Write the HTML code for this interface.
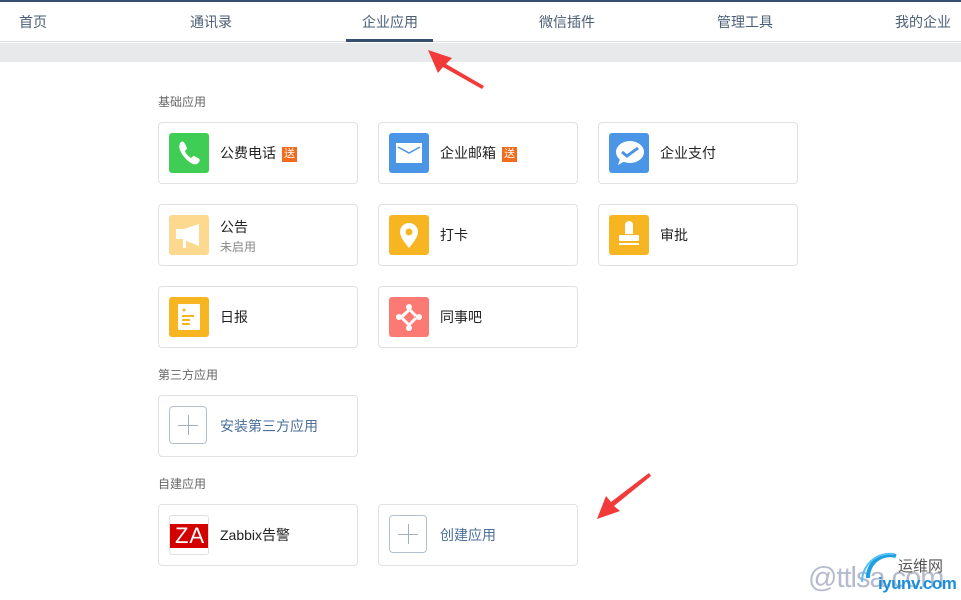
<!DOCTYPE html>
<html><head><meta charset="utf-8"><style>
*{margin:0;padding:0;box-sizing:border-box}
body{width:961px;height:600px;overflow:hidden;background:#fff;font-family:"Liberation Sans","Noto Sans CJK SC",sans-serif;position:relative}
.top{position:absolute;left:0;top:0;width:961px;height:2px;background:#34506e}
.nav{position:absolute;left:0;top:2px;width:961px;height:40px;background:#fff;border-bottom:1px solid #dcdde0}
.nav span{position:absolute;top:10px;font-size:14px;color:#4a5e75}
.ul{position:absolute;left:346px;top:39px;width:87px;height:3px;background:#34506e}
.band{position:absolute;left:0;top:43px;width:961px;height:19px;background:#e8e9eb}
.h{position:absolute;left:158px;font-size:12px;color:#666}
.c{position:absolute;width:200px;height:62px;border:1px solid #e0e1e3;border-radius:4px;background:#fff}
.ic{position:absolute;left:10px;top:10px;width:40px;height:40px;border-radius:3px;overflow:hidden}
.t{position:absolute;left:61px;top:20px;font-size:14px;color:#222;white-space:nowrap}
.s{display:inline-block;background:#f26a1b;color:#fff;font-size:11px;line-height:15px;padding:0 2px;margin-left:6px;vertical-align:1px}
.plus{position:absolute;left:10px;top:10px;width:38px;height:38px;border:1px solid #b4bfcc;border-radius:4px}
.plus:before{content:"";position:absolute;left:8px;top:18px;width:20px;height:1px;background:#a3afbc}
.plus:after{content:"";position:absolute;left:18px;top:8px;width:1px;height:20px;background:#a3afbc}
.blue{color:#4a6f99}
</style></head><body>
<div class="top"></div>
<div class="nav">
<span style="left:19px">首页</span><span style="left:190px">通讯录</span><span style="left:362px">企业应用</span><span style="left:539px">微信插件</span><span style="left:717px">管理工具</span><span style="left:895px">我的企业</span>
</div>
<div class="ul"></div>
<div class="band"></div>

<div class="h" style="top:93px">基础应用</div>
<div class="c" style="left:158px;top:122px"><div class="ic" style="background:#3fcd55"><svg width="40" height="40"><path d="M12 9c2-1 3 0 4 2l2 4c0 2-2 2-2 3 1 3 3 5 6 7 1 0 1-2 3-2l4 2c2 1 2 3 1 4-2 3-5 3-8 1-5-3-9-8-11-13-1-3-1-6 1-8z" fill="#fff"/></svg></div><div class="t">公费电话<span class="s">送</span></div></div>
<div class="c" style="left:378px;top:122px"><div class="ic" style="background:#4a95e6"><svg width="40" height="40"><rect x="7" y="10" width="26" height="20" fill="#fff"/><path d="M9 14l11 6 11-6" stroke="#4a95e6" stroke-width="1.5" fill="none"/></svg></div><div class="t">企业邮箱<span class="s">送</span></div></div>
<div class="c" style="left:598px;top:122px"><div class="ic" style="background:#4a95e6"><svg width="40" height="40"><ellipse cx="21" cy="19" rx="14" ry="11" fill="#fff"/><path d="M11 26l-2 6 7-4z" fill="#fff"/><path d="M13 19l5 4 11-8" stroke="#4a95e6" stroke-width="3" fill="none"/></svg></div><div class="t">企业支付</div></div>

<div class="c" style="left:158px;top:204px"><div class="ic" style="background:#fcd98f"><svg width="40" height="40"><rect x="7" y="14" width="8" height="10" fill="#fff"/><path d="M15 14l15-5v22l-15-6z" fill="#fff"/><rect x="14" y="23" width="3" height="10" fill="#fff"/></svg></div><div class="t" style="top:12px">公告</div><div class="t" style="top:33px;font-size:12px;color:#888">未启用</div></div>
<div class="c" style="left:378px;top:204px"><div class="ic" style="background:#f7b521"><svg width="40" height="40"><path d="M20 33c-4-5-9-11-9-16a9 9 0 0118 0c0 5-5 11-9 16z" fill="#fff"/><circle cx="20" cy="17" r="3.5" fill="#f7b521"/></svg></div><div class="t">打卡</div></div>
<div class="c" style="left:598px;top:204px"><div class="ic" style="background:#f7b521"><svg width="40" height="40"><path d="M16 10a4 4 0 018 0v9h-8z" fill="#fff"/><rect x="10" y="20" width="20" height="6" rx="1" fill="#fff"/><rect x="10" y="28" width="20" height="2" fill="#fff"/></svg></div><div class="t">审批</div></div>

<div class="c" style="left:158px;top:286px"><div class="ic" style="background:#f7b521"><svg width="40" height="40"><rect x="9" y="7" width="22" height="26" rx="1" fill="#fff"/><circle cx="15" cy="13" r="1.5" fill="#f7b521"/><rect x="13" y="18" width="12" height="2" fill="#f7b521"/><rect x="13" y="22" width="8" height="2" fill="#f7b521"/><rect x="13" y="26" width="8" height="2" fill="#f7b521"/></svg></div><div class="t">日报</div></div>
<div class="c" style="left:378px;top:286px"><div class="ic" style="background:#fc7a74"><svg width="40" height="40"><g fill="#fff"><circle cx="20" cy="10" r="3"/><circle cx="10" cy="20" r="3"/><circle cx="30" cy="20" r="3"/><circle cx="20" cy="31" r="3"/><path d="M19 12l-8 7 3 2 7-7z"/><path d="M28 18l-6-6-2 2 6 6z"/><path d="M12 22l7 7 2-2-7-7z"/><path d="M21 29l7-7-2-2-7 7z"/></g></svg></div><div class="t">同事吧</div></div>

<div class="h" style="top:366px">第三方应用</div>
<div class="c" style="left:158px;top:395px"><div class="plus"></div><div class="t blue">安装第三方应用</div></div>

<div class="h" style="top:475px">自建应用</div>
<div class="c" style="left:158px;top:504px"><div class="ic" style="border:1px solid #e0e0e0;background:#fff"><div style="position:absolute;left:0;top:8px;width:40px;height:24px;background:#d40000;color:#fff;font-size:22px;line-height:24px;text-align:center;letter-spacing:1px">ZA</div></div><div class="t">Zabbix告警</div></div>
<div class="c" style="left:378px;top:504px"><div class="plus"></div><div class="t blue">创建应用</div></div>

<div style="position:absolute;left:808px;top:562px;font-size:29px;color:#a9b0c4;opacity:.85;letter-spacing:-1px">@ttlsa.com</div>
<svg style="position:absolute;left:0;top:0" width="961" height="600">
<polygon points="428,50 452,58 446,64 484,86 482,89 443,67 438,73" fill="#f23a3a"/>
<polygon points="597,519 606,496 611,502 649,473 651,476 614,506 620,511" fill="#f23a3a"/>
<path d="M868 578a22 22 0 0128-22" stroke="#1ba0e2" stroke-width="4" fill="none"/>
<path d="M862 582a28 28 0 0132-28" stroke="#5bc0f0" stroke-width="2" fill="none"/>
</svg>
<div style="position:absolute;left:898px;top:555px;font-size:15px;color:#555">运维网</div>
<div style="position:absolute;left:878px;top:574px;font-size:17px;color:#1b8fdc;font-weight:bold;letter-spacing:-0.5px">iyunv.com</div>
</body></html>
